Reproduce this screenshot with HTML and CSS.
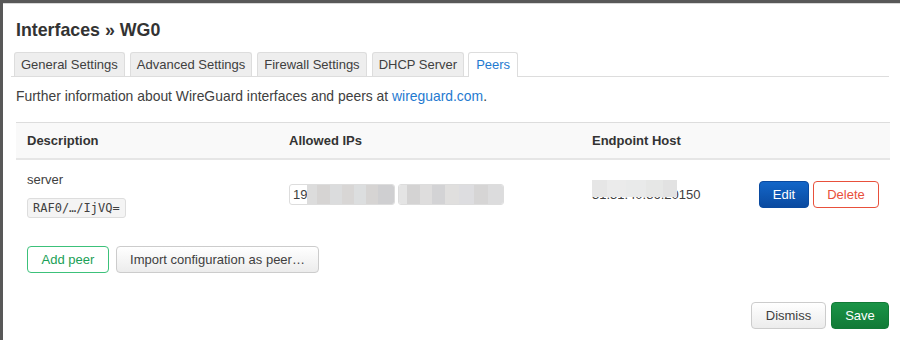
FILE: index.html
```html
<!DOCTYPE html>
<html lang="en">
<head>
    <meta charset="UTF-8">
    <title>Interfaces » WG0</title>
    <link rel="stylesheet" href="styles.css">
</head>
<body>
    <div class="modal">
        <h4 class="title">Interfaces » WG0</h4>

        <ul class="tabs">
            <li class="tab">General Settings</li>
            <li class="tab">Advanced Settings</li>
            <li class="tab">Firewall Settings</li>
            <li class="tab">DHCP Server</li>
            <li class="tab active">Peers</li>
        </ul>

        <p class="note">Further information about WireGuard interfaces and peers at <a href="#">wireguard.com</a>.</p>

        <table class="peers">
            <thead>
                <tr><th class="c-desc">Description</th><th class="c-ips">Allowed IPs</th><th class="c-host">Endpoint Host</th><th></th></tr>
            </thead>
            <tbody>
                <tr>
                    <td class="c-desc">
                        <div class="name">server</div>
                        <code class="key">RAF0/…/IjVQ=</code>
                    </td>
                    <td class="c-ips">
                        <span class="ip"><span class="ip-text">19</span><span class="blur b1"></span></span><span class="ip"><span class="blur b2"></span></span>
                    </td>
                    <td class="c-host">
                        <span class="host"><span class="host-text">31.31.40.86.20150</span><span class="blur b3"></span></span>
                    </td>
                    <td class="c-act">
                        <button class="btn btn-edit">Edit</button><button class="btn btn-delete">Delete</button>
                    </td>
                </tr>
            </tbody>
        </table>

        <div class="actions">
            <button class="btn btn-add">Add peer</button>
            <button class="btn">Import configuration as peer…</button>
        </div>

        <div class="footer">
            <button class="btn">Dismiss</button>
            <button class="btn btn-save">Save</button>
        </div>
    </div>
</body>
</html>
```

FILE: styles.css
```css
html { background: #585858; }
body { margin: 0; padding: 3px 0 0 3px; font-family: "Liberation Sans", Arial, sans-serif; font-size: 14px; color: #404040; }
.modal { background: #fff; height: 337px; padding: 0 11px 0 13px; box-sizing: border-box; border-top: 1px solid #d8d8d8; }
.title { margin: 0; padding-top: 14px; font-size: 17.8px; font-weight: bold; color: #333; line-height: 24px; }
.tabs { list-style: none; margin: 10px 0 0 -5px; padding: 0 0 0 3px; display: flex; gap: 4px; border-bottom: 1px solid #ddd; font-size: 13px; }
.tab { background: #eee; border: 1px solid #ddd; border-bottom: none; border-radius: 3px 3px 0 0; padding: 0 6px; line-height: 23px; height: 23px; color: #404040; }
.tab + .tab { margin-left: 1px; }
.tab.active { background: #fff; color: #1f7ad0; margin-bottom: -1px; height: 24px; padding: 0 7px; margin-left: 0; }
.note { margin: 10px 0 0; line-height: 18px; font-size: 13.9px; }
.note a { color: #1f7ad0; text-decoration: none; }
.peers { width: 874px; margin-top: 17px; border-collapse: collapse; font-size: 13px; }
.peers th { background: #f9f9f9; text-align: left; font-weight: bold; color: #333; height: 35px; padding: 0 0 0 11px; border-top: 1px solid #ddd; border-bottom: 2px solid #e6e6e6; }
.peers td { padding: 11px 0 0 11px; vertical-align: top; height: 65px; box-sizing: border-box; }
.c-desc { width: 251px; }
.c-ips { width: 292px; }
.c-host { width: 167px; }
.name { line-height: 16px; margin-top: 1px; }
.key { display: inline-block; margin-top: 10px; font-family: "DejaVu Sans Mono", monospace; font-size: 12px; line-height: 18px; padding: 0 5px; background: #f4f4f4; border: 1px solid #ddd; border-radius: 3px; color: #404040; }
.peers td.c-ips { padding-top: 24px; }
.ip { display: inline-flex; align-items: center; width: 104px; height: 19px; border: 1px solid #ddd; border-radius: 3px; margin-right: 3px; font-size: 13px; overflow: hidden; vertical-align: top; }
.ip-text { padding-left: 3px; width: 14px; }
.blur { display: inline-block; height: 100%; background: linear-gradient(90deg, #dcdcdc 0 12%, #d6d4d3 12% 26%, #dbdcdd 26% 40%, #d8d6d5 40% 54%, #dcdedf 54% 68%, #d6d4d3 68% 82%, #cfcfd1 82% 100%); }
.b1 { flex: 1; }
.b2 { width: 100%; background: linear-gradient(90deg, #e4e4e4 0 8%, #d4d3d3 8% 20%, #dedddd 20% 32%, #d3d3d5 32% 44%, #e0dfde 44% 58%, #dddde0 58% 72%, #d6d5d5 72% 86%, #dcdcdd 86% 100%); }
.peers td.c-host { padding-top: 20px; }
.host { position: relative; display: inline-block; line-height: 18px; padding-top: 6px; }
.host .blur { position: absolute; left: 0; top: 0; width: 85px; height: 17px; background: linear-gradient(90deg, #e6e6e6 0 18%, #ebebeb 18% 40%, #e9eaea 40% 64%, #e6e7e6 64% 84%, #e2e2e2 84% 100%); }
.peers td.c-act { padding: 21px 0 0; white-space: nowrap; }
.btn { font-family: inherit; font-size: 13px; height: 27px; padding: 0 13px; border: 1px solid #ccc; border-radius: 4px; background: linear-gradient(#fff, #ececec); color: #404040; cursor: pointer; }
.btn-edit { background: linear-gradient(#1366c8, #0a4aa0); border-color: #0a4aa0; color: #fff; width: 50px; padding: 0; margin-right: 4px; }
.btn-delete { background: #fff; border-color: #e8503b; color: #e8503b; width: 66px; padding: 0; }
.actions { display: flex; gap: 7px; margin-top: 22px; padding-left: 11px; }
.btn-add { background: #fff; border-color: #3cc17a; color: #1aa056; width: 82px; padding: 0; }
.actions .btn:last-child { width: 203px; padding: 0; }
.footer { display: flex; justify-content: flex-end; gap: 5px; margin-top: 29px; }
.footer .btn { width: 75px; padding: 0; }
.footer .btn-save { width: 58px; background: linear-gradient(#1a9447, #117a36); border-color: #117a36; color: #fff; }
```
